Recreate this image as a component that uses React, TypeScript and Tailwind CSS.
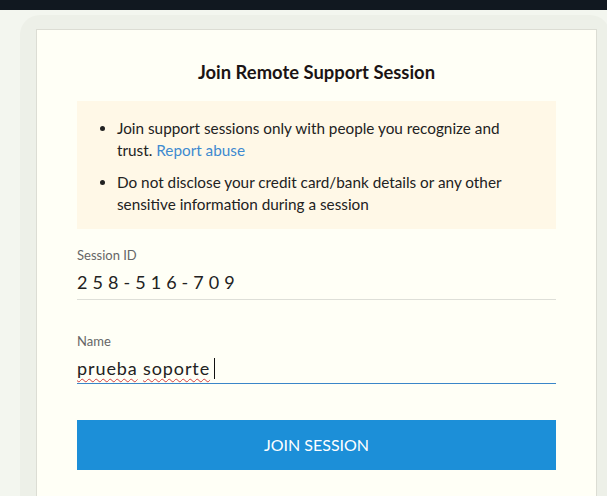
import { useState } from 'react';

export default function App() {
  const [name] = useState('prueba soporte');

  return (
    <div className="h-[496px] w-[607px] overflow-hidden bg-[#f3f6ef] font-['Lato','Liberation_Sans',sans-serif] text-[#222]">
      <div className="h-[10px] bg-[#111820]" />
      <div className="pl-[20px] pt-[5px]">
        <div className="w-[590px] rounded-tl-[20px] rounded-tr-[20px] bg-[#edf0e8] pl-[16px] pr-[13px] pt-[14px]">
          <div className="h-[480px] border border-[#dcddd4] bg-[#fffff6] px-[40px] pt-[30px]">
            <h1 className="text-center text-[18.4px] font-bold leading-[24px] text-[#1b1414]">
              Join Remote Support Session
            </h1>

            <div className="mt-[17px] bg-[#fff8e7] pb-[14px] pl-[40px] pr-[40px] pt-[16px]">
              <ul className="list-disc space-y-[10px] text-[15.3px] leading-[22px] text-[#222]">
                <li>
                  Join support sessions only with people you recognize and trust.{' '}
                  <a href="#" className="text-[#3e8ad0]">Report abuse</a>
                </li>
                <li>
                  Do not disclose your credit card/bank details or any other sensitive information during a session
                </li>
              </ul>
            </div>

            <div className="mt-[17px]">
              <label className="block text-[13px] leading-[18px] text-[#666]">Session ID</label>
              <div className="mt-[6px] pb-[5px] text-[18px] leading-[24px] tracking-[0.28em] text-[#222]">
                258-516-709
              </div>
              <div className="h-[1px] bg-[#dedfd8]" />
            </div>

            <div className="mt-[32px]">
              <label className="block text-[13px] leading-[18px] text-[#666]">Name</label>
              <div className="mt-[6px] flex items-center pb-[3px] text-[18px] leading-[24px] tracking-[0.05em] text-[#222]">
                {name.split(' ').map((w, i) => (
                  <span key={i} className="mr-[0.3em] underline decoration-[#d24040] decoration-wavy decoration-1 underline-offset-[3px]">
                    {w}
                  </span>
                ))}
                <span className="ml-[-1px] inline-block h-[21px] w-[1px] bg-[#111]" />
              </div>
              <div className="h-[1px] bg-[#3a86c9]" />
            </div>

            <button className="mt-[36px] h-[50px] w-full bg-[#1c8fd8] text-[16px] uppercase text-white">
              Join Session
            </button>
          </div>
        </div>
      </div>
    </div>
  );
}
